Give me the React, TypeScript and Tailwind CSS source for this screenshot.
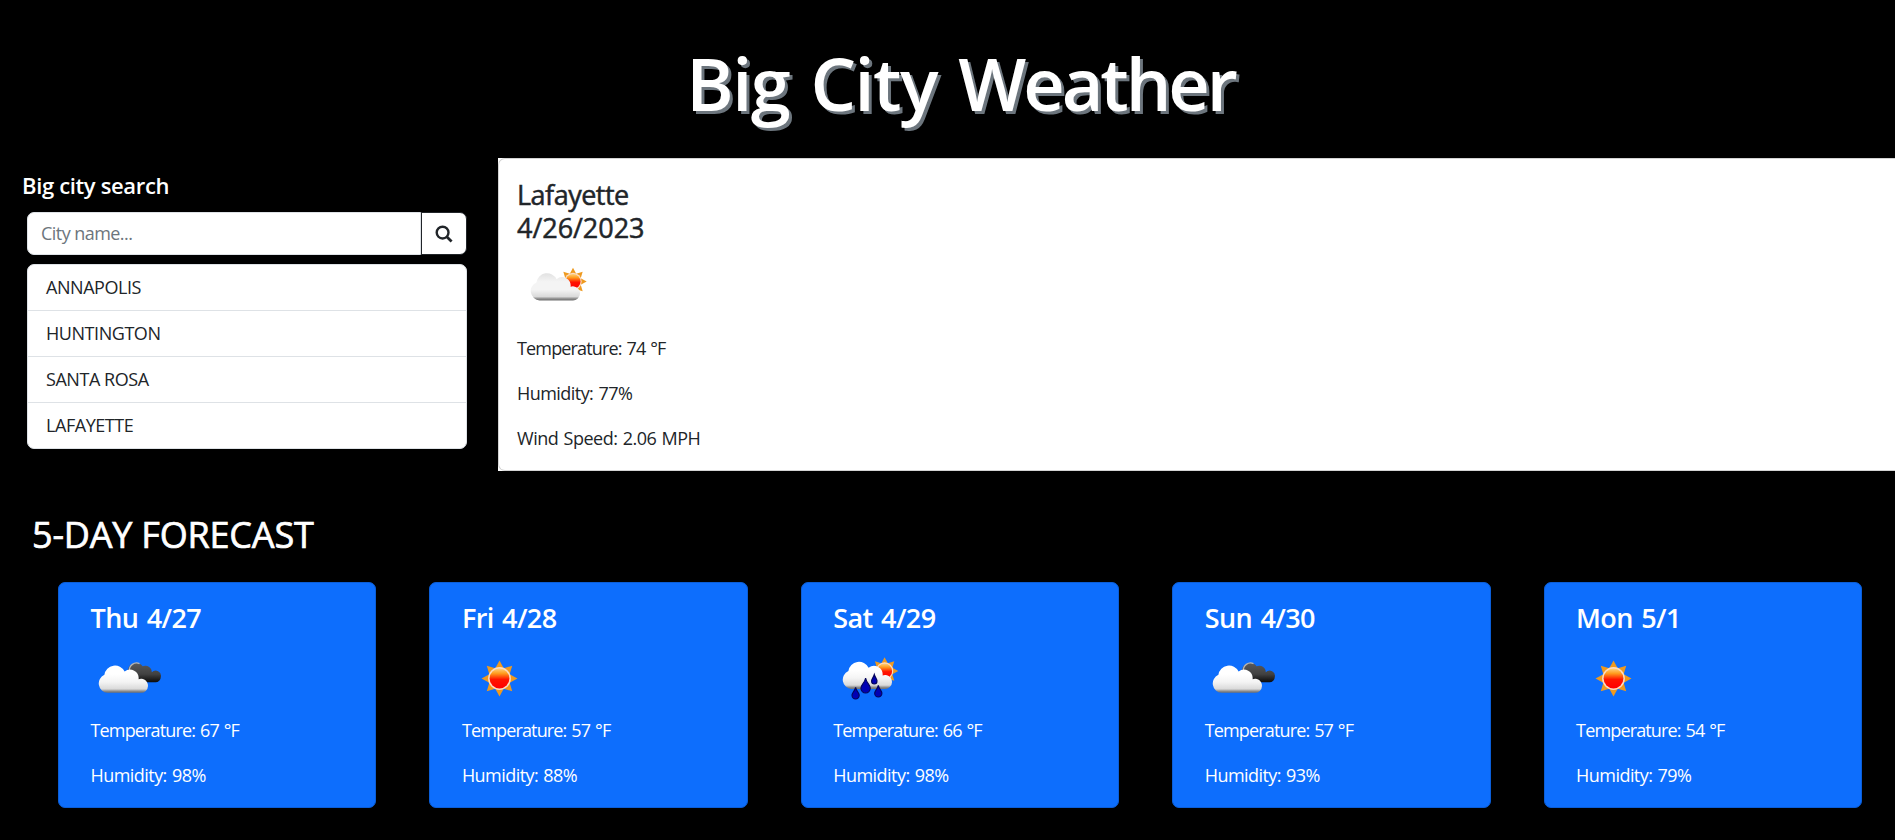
import { useId } from "react";

type IconKind = "partly" | "clouds" | "sun" | "showers";

const cities = ["ANNAPOLIS", "HUNTINGTON", "SANTA ROSA", "LAFAYETTE"];

const forecast: { day: string; icon: IconKind; temp: number; humidity: number }[] = [
  { day: "Thu 4/27", icon: "clouds", temp: 67, humidity: 98 },
  { day: "Fri 4/28", icon: "sun", temp: 57, humidity: 88 },
  { day: "Sat 4/29", icon: "showers", temp: 66, humidity: 98 },
  { day: "Sun 4/30", icon: "clouds", temp: 57, humidity: 93 },
  { day: "Mon 5/1", icon: "sun", temp: 54, humidity: 79 },
];

function starPoints(tip: number, inner: number) {
  return Array.from({ length: 16 }, (_, i) => {
    const r = i % 2 === 0 ? tip : inner;
    const a = (i * Math.PI) / 8;
    return `${(Math.sin(a) * r).toFixed(2)},${(-Math.cos(a) * r).toFixed(2)}`;
  }).join(" ");
}

function Sun({ x, y, scale, fill }: { x: number; y: number; scale: number; fill: string }) {
  return (
    <g transform={`translate(${x} ${y}) scale(${scale})`}>
      <polygon points={starPoints(18, 11)} fill="#ee9a20" />
      <circle r="11.4" fill="#fbdcc4" />
      <circle r="9.9" fill={fill} />
    </g>
  );
}

function Cloud({ x, y, fill }: { x: number; y: number; fill: string }) {
  return (
    <path
      transform={`translate(${x} ${y})`}
      fill={fill}
      d="M16.5 51.8A9.4 9.4 0 0 1 13.4 33.8A10.7 10.7 0 0 1 33.6 30.6A8.6 8.6 0 0 1 47.6 38.2A7 7 0 0 1 57 45A7 7 0 0 1 49.8 51.8Z"
    />
  );
}

function Drop({ x, y, h, w }: { x: number; y: number; h: number; w: number }) {
  const r = w / 2;
  return (
    <path
      d={`M${x} ${y}C${x + 1} ${y + h * 0.35} ${x + r} ${y + h * 0.45} ${x + r} ${y + h - r}A${r} ${r} 0 0 1 ${x - r} ${y + h - r}C${x - r} ${y + h * 0.45} ${x - 1} ${y + h * 0.35} ${x} ${y}Z`}
      fill="#0000b4"
      stroke="#04045c"
      strokeWidth="1.1"
    />
  );
}

function WeatherIcon({ kind }: { kind: IconKind }) {
  const id = useId();
  const white = `${id}w`;
  const dark = `${id}d`;
  const red = `${id}r`;
  return (
    <svg width="75" height="75" viewBox="0 0 75 75" className="block blur-[0.4px]">
      <defs>
        <linearGradient id={white} gradientUnits="userSpaceOnUse" x1="0" y1="23" x2="0" y2="52">
          <stop offset="0" stopColor={kind === "partly" ? "#dedede" : "#ffffff"} />
          <stop offset="0.35" stopColor={kind === "partly" ? "#f4f4f4" : "#ffffff"} />
          <stop offset="0.62" stopColor="#f4f4f4" />
          <stop offset="0.86" stopColor="#dadada" />
          <stop offset="0.94" stopColor="#8a8a8a" />
          <stop offset="1" stopColor="#6c6c6c" />
        </linearGradient>
        <linearGradient id={dark} gradientUnits="userSpaceOnUse" x1="0" y1="20" x2="0" y2="42">
          <stop offset="0" stopColor="#5e5e5e" />
          <stop offset="0.6" stopColor="#414141" />
          <stop offset="1" stopColor="#050505" />
        </linearGradient>
        <linearGradient id={red} x1="0" y1="0" x2="0" y2="1">
          <stop offset="0" stopColor="#ffd27a" />
          <stop offset="0.25" stopColor="#ff9a1c" />
          <stop offset="0.55" stopColor="#ff1400" />
          <stop offset="1" stopColor="#ff0000" />
        </linearGradient>
      </defs>
      {kind === "sun" && <Sun x={37.5} y={37.5} scale={1} fill={`url(#${red})`} />}
      {kind === "partly" && (
        <>
          <Sun x={56} y={33.5} scale={0.76} fill={`url(#${red})`} />
          <Cloud x={6} y={0.6} fill={`url(#${white})`} />
        </>
      )}
      {kind === "clouds" && (
        <>
          <path
            d="M40 41.3L37 29A8.2 8.2 0 0 1 51.6 25.2A6.6 6.6 0 0 1 60.8 31.2A5.3 5.3 0 0 1 69.8 36A5.3 5.3 0 0 1 64.5 41.3Z"
            fill={`url(#${dark})`}
          />
          <path d="M38.4 30A7.2 7.2 0 0 1 48.5 22.6" fill="none" stroke="#b5b5b5" strokeWidth="1.3" />
          <Cloud x={0} y={0} fill={`url(#${white})`} />
        </>
      )}
      {kind === "showers" && (
        <>
          <Sun x={51.6} y={30} scale={0.76} fill={`url(#${red})`} />
          <Cloud x={2} y={-3.8} fill={`url(#${white})`} />
          <Drop x={22.6} y={46.5} h={11.5} w={7.2} />
          <Drop x={32.6} y={37} h={15} w={9.4} />
          <Drop x={41.3} y={33.5} h={9.5} w={5.4} />
          <Drop x={45.3} y={44.5} h={11.5} w={7.2} />
        </>
      )}
    </svg>
  );
}

export default function App() {
  return (
    <div className="h-[840px] overflow-hidden bg-black font-['Open_Sans','Noto_Sans',sans-serif] text-[18px] leading-[27px] tracking-[-0.55px] text-[#212529]">
      <header className="flex h-[158px] justify-center pt-[40px] pl-[26px]">
        <h1 className="text-[72px] leading-[86px] font-semibold tracking-[-1.5px] whitespace-nowrap text-white [text-shadow:3px_3px_#6c757d] [word-spacing:4px]">
          Big City <span className="tracking-[-3.1px]">Weather</span>
        </h1>
      </header>

      <div className="flex h-[313px]">
        <aside className="w-[498px] shrink-0 pt-[14px] pr-[31px] pl-[27px]">
          <h2 className="-ml-[5px] text-[22px] leading-[27px] font-semibold tracking-[-0.35px] text-white">
            Big city search
          </h2>
          <form className="mt-[13px] flex h-[43px]" onSubmit={(e) => e.preventDefault()}>
            <input
              aria-label="City"
              placeholder="City name..."
              className="min-w-0 flex-1 rounded-l-[7px] border border-[#dee2e6] bg-white px-[13px] text-[18px] tracking-[-0.55px] outline-none placeholder:text-[#6c757d]"
            />
            <button
              type="submit"
              aria-label="Search"
              className="flex w-[46px] items-center justify-center rounded-r-[7px] border border-[#212529] bg-white"
            >
              <svg width="18" height="18" viewBox="0 0 18 18" fill="none" stroke="#212529">
                <circle cx="7.6" cy="7.6" r="5.9" strokeWidth="2.4" />
                <path d="M12 12L16.6 16.4" strokeWidth="2.8" />
              </svg>
            </button>
          </form>
          <ul className="mt-[9px] h-[185px] overflow-hidden rounded-[7px] border border-[#dee2e6] bg-white tracking-[-0.45px]">
            {cities.map((city) => (
              <li key={city} className="h-[46px] border-b border-[#dee2e6] px-[18px] pt-[9px] last:border-b-0">
                {city}
              </li>
            ))}
          </ul>
        </aside>

        <main className="min-w-0 flex-1 bg-white">
          <section className="h-full rounded-l-[7px] border border-r-0 border-[#d3d3d3] px-[18px] pt-[19px]">
            <h3 className="text-[27px] leading-[33px] tracking-[-0.5px] [-webkit-text-stroke:0.5px_#212529]">
              Lafayette
              <br />
              <span className="tracking-[-0.05px]">4/26/2023</span>
            </h3>
            <div className="h-[91px] pt-[4px]">
              <WeatherIcon kind="partly" />
            </div>
            <div className="flex flex-col gap-[18px] [word-spacing:1px]">
              <p className="tracking-[-0.85px]">Temperature: 74 °F</p>
              <p>Humidity: 77%</p>
              <p className="tracking-[-0.48px]">Wind Speed: 2.06 MPH</p>
            </div>
          </section>
        </main>
      </div>

      <section className="pt-[42px]">
        <h2 className="pl-[32px] text-[36px] leading-[43px] tracking-[-0.2px] text-white [-webkit-text-stroke:0.7px_#fff]">
          5-DAY FORECAST
        </h2>
        <div className="mt-[26px] grid grid-cols-5 gap-[53px] pr-[33px] pl-[58px]">
          {forecast.map((d) => (
            <article
              key={d.day}
              className="h-[226px] rounded-[7px] border border-[#0b5ed7] bg-[#0d6efd] pt-[19px] pl-[31.5px] text-white"
            >
              <h4 className="text-[27px] leading-[32.4px] font-semibold tracking-[-0.6px] [word-spacing:2px]">{d.day}</h4>
              <div className="mt-[6.5px] h-[76.5px]">
                <WeatherIcon kind={d.icon} />
              </div>
              <div className="flex flex-col gap-[18px] [word-spacing:1px]">
                <p className="tracking-[-0.85px]">Temperature: {d.temp} °F</p>
                <p>Humidity: {d.humidity}%</p>
              </div>
            </article>
          ))}
        </div>
      </section>
    </div>
  );
}
